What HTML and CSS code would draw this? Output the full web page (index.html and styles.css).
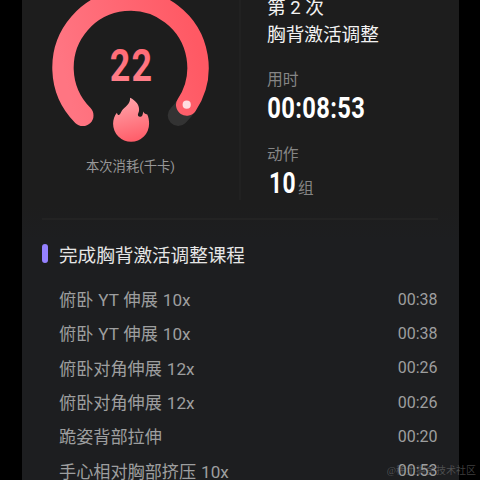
FILE: index.html
```html
<!DOCTYPE html>
<html lang="zh-CN">
<head>
<meta charset="utf-8">
<title>训练总结</title>
<link rel="stylesheet" href="styles.css">
</head>
<body>
<main class="card">
  <section class="summary">
    <div class="burn">
      <svg class="ring" width="218" height="152" viewBox="22 0 218 152">
        <defs>
          <linearGradient id="arc" x1="0" y1="0.6" x2="1" y2="0.4">
            <stop offset="0" stop-color="#ff7582"/>
            <stop offset="1" stop-color="#ff5964"/>
          </linearGradient>
          <linearGradient id="num" x1="0" y1="0" x2="0" y2="1">
            <stop offset="0" stop-color="#ff6470"/>
            <stop offset="1" stop-color="#ff858f"/>
          </linearGradient>
          <linearGradient id="fire" x1="0.4" y1="0" x2="0.6" y2="1">
            <stop offset="0" stop-color="#ffa3a9"/>
            <stop offset="1" stop-color="#ff5c68"/>
          </linearGradient>
        </defs>
        <path d="M186.7 105.3A67.5 67.5 0 0 1 178.2 115.4" fill="none" stroke="#333" stroke-width="21" stroke-linecap="round"/>
        <path d="M82.8 115.4A67.5 67.5 0 1 1 186.7 105" fill="none" stroke="url(#arc)" stroke-width="21.4" stroke-linecap="round"/>
        <circle cx="186.7" cy="104.7" r="4.1" fill="#ffdce0"/>
        <text class="kcal" x="109.8" y="81" textLength="43.6" lengthAdjust="spacingAndGlyphs" fill="url(#num)">22</text>
        <path d="M130 97.8C135.8 100.5 140 105.5 139 111C138.7 113 137.4 114.2 138.1 115.8C138.9 117.3 141.6 117 142.4 115.2C142.9 114 142.9 113.2 143.4 111.6C144.2 113.3 144.8 114.2 147.3 114.4C148.5 117 149.1 120 149.1 123.8A18 18 0 0 1 113.1 123.8C113.1 119.5 114.5 115.5 116.9 112.7C117.4 114.2 118 115.2 119 115C120.4 114.4 120.7 112.5 122 110.5C124.3 107 130.8 104.5 130 97.8Z" fill="url(#fire)"/>
      </svg>
      <div class="caption">本次消耗(千卡)</div>
    </div>
    <div class="stats">
      <div class="heading">第 2 次<br>胸背激活调整</div>
      <div class="label label-time">用时</div>
      <div class="value"><svg width="102" height="30"><text class="digits" x="0.2" y="25.2" textLength="98.2" lengthAdjust="spacingAndGlyphs">00:08:53</text></svg></div>
      <div class="label label-sets">动作</div>
      <div class="value value-sets"><svg width="31" height="30"><text class="digits" x="1.9" y="26" textLength="27" lengthAdjust="spacingAndGlyphs">10</text></svg><span class="unit">组</span></div>
    </div>
  </section>
  <section class="course">
    <h2 class="title">完成胸背激活调整课程</h2>
    <ul class="list">
      <li><span>俯卧 YT 伸展 10x</span><time>00:38</time></li>
      <li><span>俯卧 YT 伸展 10x</span><time>00:38</time></li>
      <li><span>俯卧对角伸展 12x</span><time>00:26</time></li>
      <li><span>俯卧对角伸展 12x</span><time>00:26</time></li>
      <li><span>跪姿背部拉伸</span><time>00:20</time></li>
      <li><span>手心相对胸部挤压 10x</span><time>00:53</time></li>
    </ul>
  </section>
</main>
<div class="watermark">@稀土掘金技术社区</div>
</body>
</html>
```
FILE: styles.css
```css
* { box-sizing: border-box; margin: 0; padding: 0; }
body {
  width: 480px;
  height: 480px;
  overflow: hidden;
  position: relative;
  background: #000;
  font-family: Roboto, "Noto Sans CJK SC", sans-serif;
}
.card {
  width: 437px;
  height: 480px;
  margin-left: 22px;
  overflow: hidden;
  background: linear-gradient(#1d1d1d 0, #1d1d1d 205px, #1d1e20 240px);
}
.summary { display: flex; height: 218px; }
.burn { width: 217px; }
.ring { display: block; }
.kcal { font-size: 45px; font-weight: 700; letter-spacing: 1.5px; }
.caption {
  padding-top: 5px;
  text-align: center;
  font-size: 13.3px;
  line-height: 20px;
  color: #989898;
}
.stats {
  width: 220px;
  height: 200px;
  padding-left: 26px;
  border-left: 2px solid #212121;
}
.heading {
  height: 48px;
  margin-top: -5px;
  font-size: 18.65px;
  line-height: 27px;
  color: #f2f2f2;
}
.label { font-size: 15.8px; line-height: 20px; color: #858585; }
.label-time { margin-top: 27px; }
.label-sets { margin-top: 22px; }
.value { display: flex; align-items: flex-end; height: 30px; margin-top: 3px; }
.value-sets { margin-top: 2px; }
.value svg { display: block; overflow: visible; }
.digits { font-size: 29.5px; font-weight: 700; letter-spacing: 0.5px; fill: #fff; }
.unit { margin-bottom: -2px; font-size: 15.6px; line-height: 20px; color: #858585; }
.course { padding: 0 21.5px 0 20px; }
.title {
  display: flex;
  align-items: center;
  height: 68px;
  border-top: 2px solid #232323;
  font-size: 18.6px;
  font-weight: 400;
  color: #e6e6e6;
}
.title::before {
  content: "";
  width: 6px;
  height: 19px;
  margin-right: 11px;
  border-radius: 3px;
  background: #9581ff;
}
.list { padding: 0 0 0 17px; margin-top: -4.5px; list-style: none; }
.list li {
  display: flex;
  align-items: center;
  justify-content: space-between;
  height: 34.3px;
  font-size: 17.15px;
  word-spacing: 0.7px;
  color: #9d9e9f;
}
.list time { padding-top: 1.2px; font-size: 16px; }
.watermark {
  position: absolute;
  right: 4px;
  bottom: 1px;
  font-family: "Liberation Serif", "Noto Sans CJK SC", serif;
  font-size: 10px;
  line-height: 16px;
  color: rgba(150, 150, 150, 0.42);
}
```
